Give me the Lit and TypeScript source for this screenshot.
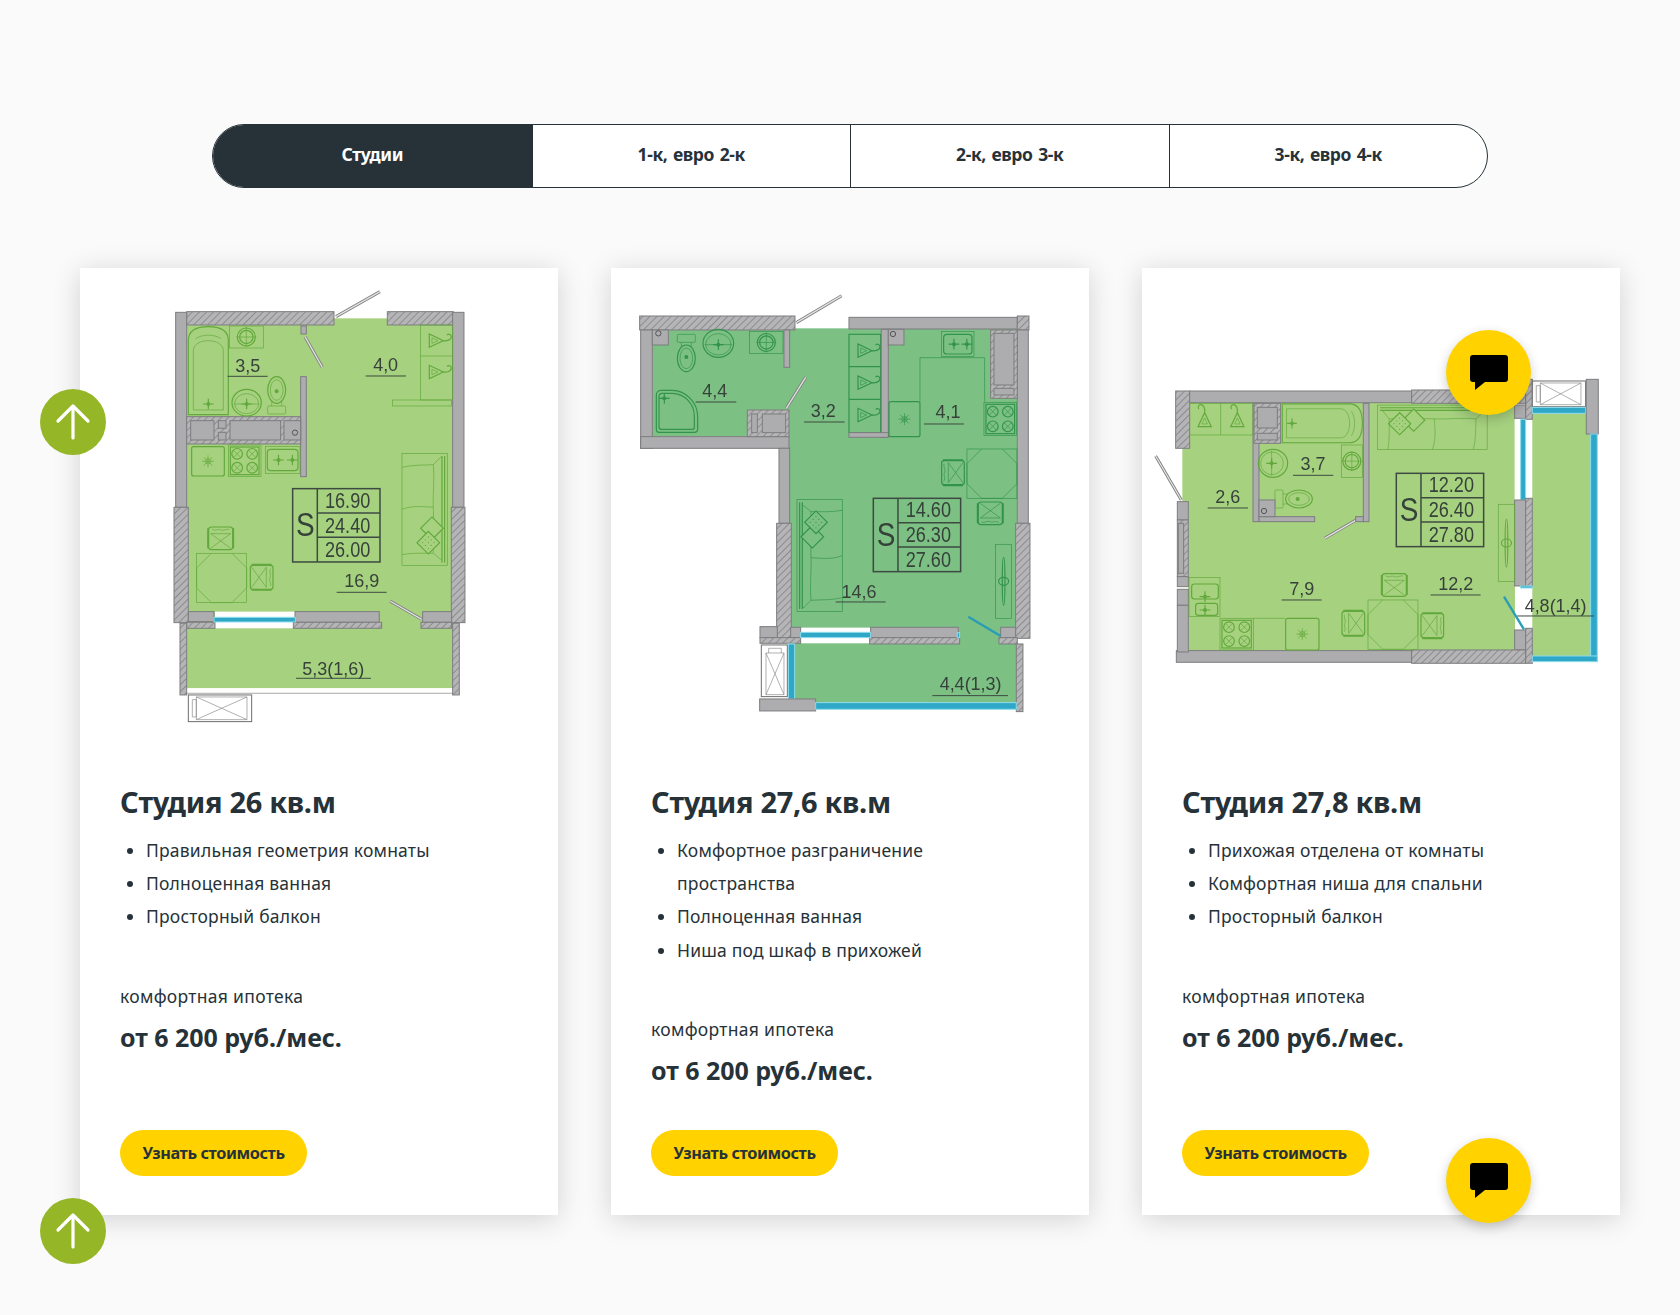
import { LitElement, html, css, svg } from 'lit';
import { customElement } from 'lit/decorators.js';

const wall = (x: number, y: number, w: number, h: number) =>
  svg`<rect class="wall" x=${x} y=${y} width=${w} height=${h}></rect>`;
const hatch = (x: number, y: number, w: number, h: number) =>
  svg`<rect class="hatch" x=${x} y=${y} width=${w} height=${h}></rect>`;
const blue = (x: number, y: number, w: number, h: number) =>
  svg`<rect class="glass" x=${x} y=${y} width=${w} height=${h}></rect>`;
const white = (x: number, y: number, w: number, h: number) =>
  svg`<rect class="blank" x=${x} y=${y} width=${w} height=${h}></rect>`;

const door = (x1: number, y1: number, x2: number, y2: number, glass = false) => svg`
  <line class=${glass ? 'door-blue' : 'door-out'} x1=${x1} y1=${y1} x2=${x2} y2=${y2}></line>
  ${glass ? '' : svg`<line class="door-in" x1=${x1} y1=${y1} x2=${x2} y2=${y2}></line>`}`;

const label = (x: number, y: number, t: string, u1: number, u2: number, uy: number) => svg`
  <text class="lbl" x=${x} y=${y}>${t}</text>
  <line class="rule" x1=${u1} y1=${uy} x2=${u2} y2=${uy}></line>`;

const info = (x: number, y: number, a: string, b: string, c: string) => svg`
  <rect class="tbl" x=${x} y=${y} width="262" height="220"></rect>
  <line class="tbl" x1=${x + 74} y1=${y} x2=${x + 74} y2=${y + 220}></line>
  <line class="tbl" x1=${x + 74} y1=${y + 73} x2=${x + 262} y2=${y + 73}></line>
  <line class="tbl" x1=${x + 74} y1=${y + 146} x2=${x + 262} y2=${y + 146}></line>
  <text class="big" x=${x + 38} y=${y + 143} textLength="56" lengthAdjust="spacingAndGlyphs">S</text>
  <text class="num" x=${x + 165} y=${y + 57} textLength="136" lengthAdjust="spacingAndGlyphs">${a}</text>
  <text class="num" x=${x + 165} y=${y + 132} textLength="136" lengthAdjust="spacingAndGlyphs">${b}</text>
  <text class="num" x=${x + 165} y=${y + 206} textLength="136" lengthAdjust="spacingAndGlyphs">${c}</text>`;

const at = (x: number, y: number, r: number, body: unknown) =>
  svg`<g transform="translate(${x} ${y}) rotate(${r})">${body}</g>`;

const drain = (x: number, y: number) => svg`
  <path class="f" d="M${x - 16} ${y}h32M${x} ${y - 16}v32"></path>
  <circle class="dot" cx=${x} cy=${y} r="6"></circle>`;

// all furniture is drawn around its own centre, then rotated into place
const hanger = svg`
  <path class="f" d="M-20 20L22 0L-20 -20Z"></path>
  <path class="f thin" d="M-12 8L6 0L-12 -8Z"></path>
  <path class="f" d="M22 0c10 2 24 -2 24 -12c0 -6 -8 -10 -13 -5"></path>`;

const washer = (x: number, y: number, w: number, h: number) => svg`
  <rect class="f thin" x=${x} y=${y} width=${w} height=${h}></rect>
  <circle class="f" cx=${x + w / 2} cy=${y + h / 2} r="27"></circle>
  <circle class="f" cx=${x + w / 2} cy=${y + h / 2} r="20"></circle>
  <path class="f thin" d="M${x + w / 2 - 30} ${y + h / 2}h60M${x + w / 2} ${y + h / 2 - 30}v60"></path>`;

const roundSink = (x: number, y: number, rx: number, ry: number) => svg`
  <ellipse class="f" cx=${x} cy=${y} rx=${rx} ry=${ry}></ellipse>
  <ellipse class="f thin" cx=${x} cy=${y + 3} rx=${rx - 8} ry=${ry - 10}></ellipse>
  <path class="f thin" d="M${x - rx + 5} ${y + 4}h${rx * 2 - 10}"></path>
  ${drain(x, y + 4)}`;

const toilet = svg`
  <ellipse class="f" cx="0" cy="10" rx="27" ry="40"></ellipse>
  <ellipse class="f thin" cx="0" cy="10" rx="19" ry="31"></ellipse>
  <rect class="f thin" x="-27" y="-62" width="54" height="24" rx="3"></rect>
  <path class="f thin" d="M-16 -38c2 8 2 10 0 14M16 -38c-2 8 -2 10 0 14"></path>
  <circle class="dot" cx="0" cy="6" r="6"></circle>`;

const bath = svg`
  <path class="f" d="M-60 132V-90c0 -28 20 -42 60 -42s60 14 60 42V132Z"></path>
  <path class="f thin" d="M-45 118V-60c0 -40 90 -40 90 0V118Z"></path>
  <path class="f thin" d="M-38 -96c20 -14 56 -14 76 0"></path>
  ${drain(0, 100)}`;

const chair = svg`
  <rect class="f" x="-36" y="-34" width="72" height="68" rx="8"></rect>
  <path class="f thin" d="M-30 -14L30 30M30 -14L-30 30M-30 -14H30"></path>
  <path class="f thin" d="M-26 -28c10 8 18 -2 26 3c8 4 16 -4 26 -2"></path>
  <path class="f thick" d="M-38 -30V30M38 -30V30"></path>`;

const table = (x: number, y: number) => svg`
  <rect class="f thin" x=${x} y=${y} width="150" height="148"></rect>
  <path class="f thin" d="M${x + 44} ${y}L${x} ${y + 44}V${y + 104}L${x + 44} ${y + 148}H${x + 106}L${x + 150} ${y + 104}V${y + 44}L${x + 106} ${y}"></path>`;

const burner = (x: number, y: number) => svg`
  <circle class="f" cx=${x} cy=${y} r="16"></circle>
  <path class="f thin" d="M${x - 11} ${y - 11}L${x + 11} ${y + 11}M${x + 11} ${y - 11}L${x - 11} ${y + 11}"></path>`;

const stove = (x: number, y: number, w: number, h: number) => svg`
  <rect class="f thin" x=${x} y=${y} width=${w} height=${h}></rect>
  <rect class="f" x=${x + 6} y=${y + 6} width=${w - 12} height=${h - 12}></rect>
  ${burner(x + w * 0.27, y + h * 0.28)}${burner(x + w * 0.73, y + h * 0.28)}
  ${burner(x + w * 0.27, y + h * 0.72)}${burner(x + w * 0.73, y + h * 0.72)}`;

const fridge = (x: number, y: number, w: number, h: number) => {
  const cx = x + w / 2;
  const cy = y + h / 2;
  return svg`
    <rect class="f" x=${x} y=${y} width=${w} height=${h} rx="6"></rect>
    <path class="f thin" d="M${cx - 18} ${cy}h36M${cx} ${cy - 18}v36M${cx - 13} ${cy - 13}l26 26M${cx + 13} ${cy - 13}l-26 26"></path>
    <circle class="f thin" cx=${cx} cy=${cy} r="8"></circle>`;
};

const kitchenSink = (x: number, y: number, w: number, h: number) => svg`
  <rect class="f thin" x=${x} y=${y} width=${w} height=${h}></rect>
  <rect class="f" x=${x + 6} y=${y + 8} width=${w - 12} height=${h - 16} rx="10"></rect>
  ${drain(x + w * 0.38, y + h / 2)}${drain(x + w * 0.78, y + h / 2)}`;

const pillow = svg`
  <rect class="f pad" x="-24" y="-24" width="48" height="48"></rect>
  <path class="f" stroke-linecap="round" d="M-12 -12h.1M0 -12h.1M12 -12h.1M-12 0h.1M0 0h.1M12 0h.1M-12 12h.1M0 12h.1M12 12h.1"></path>`;

// width 136, height 336, back against the right edge
const sofa = svg`
  <rect class="f thin" x="-68" y="-168" width="136" height="336"></rect>
  <path class="f thin" d="M-68 -126c30 -8 66 -6 94 -8C30 -90 24 -40 26 -6c-30 -2 -64 -6 -94 6M26 -6c2 40 -2 90 0 138c-30 0 -62 -2 -94 4"></path>
  <path class="f" d="M52 -160V160M60 -160V160"></path>
  <path class="f thin" d="M26 -134c10 -10 18 -20 26 -24M26 132c10 8 18 16 26 20"></path>
  ${at(22, 57, 45, svg`<rect class="f pad" x="-24" y="-24" width="48" height="48"></rect>`)}
  ${at(11, 100, 45, pillow)}`;

const tv = (x: number, y: number, w: number, h: number) => svg`
  <rect class="f thin" x=${x} y=${y} width=${w} height=${h}></rect>
  <ellipse class="f" cx=${x + w / 2} cy=${y + h / 2} rx="4" ry="72"></ellipse>
  <ellipse class="f" cx=${x + w / 2} cy=${y + h / 2} rx="15" ry="12"></ellipse>`;

const boxX = (x: number, y: number, w: number, h: number) => svg`
  <rect class="box" x=${x} y=${y} width=${w} height=${h}></rect>
  <path class="xline" d="M${x + 24} ${y + 6}H${x + w - 14}V${y + h - 6}H${x + 24}ZM${x + 24} ${y + 6}L${x + w - 14} ${y + h - 6}M${x + 24} ${y + h - 6}L${x + w - 14} ${y + 6}M${x + 12} ${y + 14}H${x + 24}V${y + h - 14}H${x + 12}Z"></path>`;

const boxXTall = (x: number, y: number, w: number, h: number) => svg`
  <rect class="box" x=${x} y=${y} width=${w} height=${h}></rect>
  <path class="xline" d="M${x + 14} ${y + 24}V${y + h - 6}H${x + w - 10}V${y + 24}ZM${x + 14} ${y + 24}L${x + w - 10} ${y + h - 6}M${x + w - 10} ${y + 24}L${x + 14} ${y + h - 6}M${x + 22} ${y + 24}V${y + 10}H${x + w - 18}V${y + 24}"></path>`;

const socket = (x: number, y: number, w: number, h: number, cx: number, cy: number) => svg`
  ${wall(x, y, w, h)}
  <circle class="hole" cx=${cx} cy=${cy} r="8"></circle>`;

const planOne = () => svg`
  <rect class="floor" x="80" y="115" width="800" height="1110"></rect>
  ${hatch(80, 95, 442, 40)}${hatch(682, 95, 198, 40)}
  ${wall(47, 97, 33, 585)}${wall(878, 97, 34, 585)}
  ${hatch(42, 682, 43, 346)}${hatch(874, 682, 41, 346)}
  ${white(165, 995, 240, 50)}
  ${wall(85, 995, 77, 30)}${hatch(80, 1027, 85, 18)}
  ${wall(405, 995, 253, 32)}${hatch(400, 1027, 265, 18)}
  ${wall(788, 995, 87, 32)}${hatch(783, 1027, 92, 18)}
  ${blue(162, 1012, 244, 14)}
  <rect class="blank" x="80" y="1225" width="798" height="14"></rect>
  <line class="tbl-light" x1="80" y1="1240" x2="878" y2="1240"></line>
  ${hatch(60, 1030, 20, 215)}${hatch(878, 1030, 20, 215)}
  ${boxX(85, 1245, 190, 80)}
  ${door(528, 110, 660, 35)}${door(690, 963, 785, 1018)}
  ${wall(423, 138, 16, 24)}${door(435, 170, 487, 262)}
  ${wall(422, 290, 17, 300)}
  ${hatch(80, 410, 342, 82)}
  ${wall(92, 422, 70, 58)}${wall(175, 422, 23, 23)}${wall(175, 457, 23, 23)}${wall(210, 422, 152, 58)}
  ${socket(372, 422, 50, 58, 405, 458)}
  ${at(145, 272, 0, bath)}
  ${washer(208, 138, 102, 66)}
  ${roundSink(260, 368, 44, 40)}
  ${at(350, 340, 180, toilet)}
  ${fridge(95, 500, 98, 88)}
  ${stove(205, 495, 98, 95)}
  ${kitchenSink(316, 500, 104, 80)}
  <rect class="f thin" x="782" y="135" width="96" height="225"></rect>
  <line class="f thin" x1="782" y1="228" x2="878" y2="228"></line>
  ${at(828, 182, 0, hanger)}${at(828, 276, 0, hanger)}
  <rect class="f thin" x="698" y="360" width="177" height="18"></rect>
  ${at(794, 688, 0, sofa)}
  ${table(110, 820)}
  ${at(182, 775, 0, chair)}${at(305, 892, 90, chair)}
  ${info(398, 626, '16.90', '24.40', '26.00')}
  ${label(263, 275, '3,5', 203, 323, 289)}
  ${label(677, 272, '4,0', 617, 738, 288)}
  ${label(605, 922, '16,9', 530, 680, 937)}
  ${label(520, 1185, '5,3(1,6)', 408, 633, 1195)}`;

const planTwo = () => svg`
  <rect class="floor" x="70" y="150" width="412" height="320"></rect>
  <rect class="floor" x="480" y="145" width="685" height="930"></rect>
  <rect class="floor" x="495" y="1070" width="670" height="200"></rect>
  ${hatch(32, 108, 466, 42)}${wall(660, 112, 505, 35)}${hatch(1165, 108, 35, 42)}
  ${wall(1165, 150, 33, 580)}${hatch(1160, 730, 43, 345)}
  ${wall(35, 150, 35, 355)}${wall(35, 470, 445, 35)}${wall(450, 505, 32, 225)}
  ${hatch(443, 730, 44, 345)}
  ${white(515, 1043, 210, 47)}
  ${wall(393, 1040, 52, 33)}${wall(485, 1042, 30, 31)}${hatch(393, 1073, 122, 17)}
  ${wall(725, 1042, 263, 31)}${hatch(722, 1073, 270, 19)}
  ${wall(1115, 1042, 45, 31)}${hatch(1110, 1073, 55, 19)}
  ${blue(515, 1057, 210, 16)}${blue(985, 1058, 7, 15)}
  ${hatch(1162, 1092, 20, 203)}
  ${blue(478, 1092, 19, 165)}
  ${wall(392, 1257, 168, 36)}${blue(560, 1268, 602, 20)}
  ${boxXTall(397, 1095, 78, 155)}
  ${door(502, 128, 638, 47)}${door(472, 385, 530, 292)}
  ${door(1018, 1010, 1115, 1068, true)}
  ${wall(465, 150, 17, 112)}
  ${socket(70, 150, 48, 45, 88, 160)}
  ${at(172, 225, 0, toilet)}
  ${roundSink(268, 190, 46, 42)}
  ${washer(362, 155, 100, 65)}
  <path class="f" d="M82 345c0 -8 6 -14 14 -14h34c40 0 76 36 76 78v38c0 6 -4 10 -10 10H90c-5 0 -8 -4 -8 -10Z"></path>
  <path class="f" d="M90 350c0 -6 4 -10 10 -10h30c36 0 66 32 66 68v34c0 4 -2 6 -6 6H98c-4 0 -8 -3 -8 -8Z"></path>
  ${drain(106, 355)}
  ${hatch(355, 390, 125, 80)}${wall(368, 402, 17, 56)}${wall(400, 402, 70, 56)}
  <rect class="f" x="660" y="163" width="95" height="295"></rect>
  <path class="f" d="M660 260h95M660 358h95"></path>
  ${at(707, 212, 0, hanger)}${at(707, 308, 0, hanger)}${at(707, 405, 0, hanger)}
  ${wall(757, 148, 21, 324)}${wall(660, 458, 118, 14)}
  ${socket(778, 148, 47, 47, 792, 162)}
  ${kitchenSink(938, 155, 97, 75)}
  <path class="f thin" d="M873 365V233H1067V365"></path>
  ${hatch(1085, 150, 80, 205)}${wall(1095, 160, 60, 155)}${wall(1095, 325, 60, 20)}
  ${stove(1065, 367, 98, 100)}
  ${fridge(780, 365, 93, 105)}
  ${table(1014, 507)}
  ${at(972, 578, -90, chair)}${at(1084, 700, 180, chair)}
  ${info(733, 655, '14.60', '26.30', '27.60')}
  ${at(572, 827, 180, sofa)}
  ${tv(1100, 793, 48, 222)}
  ${label(257, 350, '4,4', 200, 322, 366)}
  ${label(583, 412, '3,2', 525, 647, 426)}
  ${label(957, 415, '4,1', 885, 1005, 432)}
  ${label(690, 955, '14,6', 620, 770, 966)}
  ${label(1025, 1230, '4,4(1,3)', 910, 1137, 1247)}`;

const planThree = () => svg`
  <rect class="floor" x="118" y="248" width="980" height="745"></rect>
  <rect class="floor" x="100" y="385" width="20" height="160"></rect>
  <rect class="floor" x="1150" y="280" width="176" height="730"></rect>
  ${hatch(80, 213, 42, 172)}${wall(122, 213, 666, 35)}${hatch(788, 210, 342, 40)}
  ${hatch(1130, 178, 20, 120)}${wall(1097, 255, 33, 40)}
  ${white(1097, 298, 18, 242)}${blue(1115, 298, 15, 242)}
  ${wall(1097, 540, 33, 258)}${hatch(1130, 535, 20, 267)}
  ${blue(1115, 798, 35, 6)}
  ${wall(1097, 930, 33, 60)}${hatch(1130, 925, 20, 105)}
  ${wall(82, 992, 706, 35)}${hatch(788, 990, 342, 40)}
  ${wall(85, 545, 33, 55)}${hatch(85, 600, 33, 170)}${wall(88, 610, 16, 150)}
  ${wall(85, 770, 33, 30)}${wall(85, 808, 33, 48)}${wall(85, 856, 33, 140)}
  ${boxX(1150, 183, 160, 77)}
  ${blue(1150, 262, 160, 18)}
  ${wall(1312, 178, 36, 164)}
  ${blue(1325, 342, 20, 683)}${blue(1150, 1008, 195, 17)}
  ${door(20, 408, 97, 540)}${door(527, 655, 625, 598)}
  ${door(1065, 830, 1125, 928, true)}
  ${wall(312, 250, 18, 355)}${wall(330, 590, 167, 15)}${wall(643, 250, 17, 355)}
  ${wall(620, 590, 23, 15)}
  ${hatch(315, 250, 80, 120)}${wall(325, 262, 60, 62)}${wall(325, 340, 60, 20)}
  <rect class="f thin" x="122" y="250" width="190" height="95"></rect>
  <line class="f thin" x1="215" y1="250" x2="215" y2="345"></line>
  ${at(167, 300, -90, hanger)}${at(265, 300, -90, hanger)}
  ${at(520, 310, 90, svg`<g transform="scale(.97 .91)">${bath}</g>`)}
  ${washer(577, 375, 63, 97)}
  ${at(372, 430, 90, roundSink(0, 0, 42, 44))}
  ${at(440, 537, -90, toilet)}
  ${socket(330, 540, 48, 50, 345, 573)}
  ${at(850, 322, -90, svg`<g transform="scale(.98 -.98)">${sofa}</g>`)}
  ${info(742, 460, '12.20', '26.40', '27.80')}
  ${tv(1048, 553, 49, 232)}
  <rect class="f thin" x="120" y="773" width="93" height="117"></rect>
  <rect class="f" x="128" y="792" width="80" height="45" rx="8"></rect>
  <rect class="f" x="140" y="850" width="66" height="36" rx="8"></rect>
  ${drain(168, 830)}${drain(168, 870)}
  ${stove(213, 895, 100, 95)}
  <line class="f thin" x1="313" y1="895" x2="408" y2="895"></line>
  ${fridge(410, 895, 100, 95)}
  ${table(657, 840)}
  ${at(736, 795, 0, chair)}${at(613, 910, -90, chair)}${at(850, 917, 90, chair)}
  ${label(492, 450, '3,7', 432, 553, 466)}
  ${label(236, 548, '2,6', 176, 297, 564)}
  ${label(458, 825, '7,9', 398, 518, 840)}
  ${label(920, 810, '12,2', 845, 995, 825)}
  ${label(1220, 875, '4,8(1,4)', 1105, 1335, 888)}`;

const cards = [
  {
    title: 'Студия 26 кв.м',
    items: ['Правильная геометрия комнаты', 'Полноценная ванная', 'Просторный балкон'],
    plan: planOne,
    tone: 'light',
    place: 'translate(80 12) scale(.3333)',
  },
  {
    title: 'Студия 27,6 кв.м',
    items: ['Комфортное разграничение пространства', 'Полноценная ванная', 'Ниша под шкаф в прихожей'],
    plan: planTwo,
    tone: 'deep',
    place: 'translate(18 12) scale(.3333)',
  },
  {
    title: 'Студия 27,8 кв.м',
    items: ['Прихожая отделена от комнаты', 'Комфортная ниша для спальни', 'Просторный балкон'],
    plan: planThree,
    tone: 'light',
    place: 'translate(7 52) scale(.3333)',
  },
];

const tabs = ['Студии', '1-к, евро 2-к', '2-к, евро 3-к', '3-к, евро 4-к'];

const arrowIcon = html`<svg width="36" height="38" viewBox="0 0 36 38">
  <path d="M18 35V3M3 18L18 3L33 18" fill="none" stroke="#fff" stroke-width="3.2" stroke-linecap="round" stroke-linejoin="round"></path>
</svg>`;

const chatIcon = html`<svg width="38" height="36" viewBox="0 0 38 36">
  <path d="M3 0H35a3 3 0 0 1 3 3V24a3 3 0 0 1 -3 3H15L5 35V27H3a3 3 0 0 1 -3 -3V3a3 3 0 0 1 3 -3Z" fill="#000"></path>
</svg>`;

@customElement('app-root')
export class AppRoot extends LitElement {
  static styles = css`
    :host {
      display: block;
      position: relative;
      width: 1680px;
      height: 1315px;
      overflow: hidden;
      background: #fafafa;
      color: #263238;
      font-family: 'Noto Sans', 'Open Sans', sans-serif;
    }
    .page {
      padding-top: 124px;
    }
    .tabs {
      display: grid;
      grid-template-columns: repeat(4, 1fr);
      width: 1276px;
      height: 64px;
      margin: 0 auto 0 212px;
      box-sizing: border-box;
      border: 1.5px solid #263238;
      border-radius: 32px;
      overflow: hidden;
      background: #fff;
    }
    .tab {
      display: flex;
      align-items: center;
      justify-content: center;
      padding-bottom: 5px;
      font-size: 17.5px;
      font-weight: 700;
      letter-spacing: -0.4px;
      word-spacing: 1.5px;
      border-left: 1.5px solid #263238;
    }
    .tab:first-child {
      border-left: 0;
    }
    .tab.on {
      background: #263238;
      color: #fff;
    }
    .cards {
      display: grid;
      grid-template-columns: repeat(3, 478px);
      column-gap: 53px;
      margin: 80px 0 0 80px;
    }
    .card {
      display: flex;
      flex-direction: column;
      height: 947px;
      box-sizing: border-box;
      padding-bottom: 39px;
      background: #fff;
      box-shadow: 0 4px 26px rgba(0, 0, 0, 0.16);
    }
    .plan {
      display: block;
      flex: none;
      width: 478px;
      height: 512px;
      filter: blur(0.4px);
    }
    .info {
      display: flex;
      flex: 1;
      flex-direction: column;
      padding: 0 40px;
    }
    h2 {
      margin: 0;
      font-size: 29px;
      line-height: 44px;
      font-weight: 700;
      letter-spacing: -0.3px;
    }
    ul {
      margin: 10px 0 0;
      padding: 0 20px 0 26px;
      font-size: 17.5px;
      line-height: 33.2px;
      letter-spacing: 0.2px;
    }
    .mortgage {
      margin-top: 47px;
      font-size: 17.5px;
      line-height: 30px;
      letter-spacing: 0.3px;
    }
    .price {
      margin-top: 6px;
      font-size: 25px;
      line-height: 40px;
      font-weight: 700;
      letter-spacing: -0.05px;
    }
    .cta {
      display: flex;
      align-items: center;
      justify-content: center;
      width: 187px;
      height: 46px;
      margin-top: auto;
      border-radius: 23px;
      background: #ffd200;
      font-size: 16.3px;
      font-weight: 700;
      letter-spacing: -0.4px;
    }
    .fab {
      position: absolute;
      display: flex;
      align-items: center;
      justify-content: center;
      border-radius: 50%;
    }
    .up {
      left: 40px;
      width: 66px;
      height: 66px;
      background: #95b627;
    }
    .chat {
      left: 1446px;
      width: 85px;
      height: 85px;
      background: #ffd200;
      box-shadow: 0 4px 12px rgba(0, 0, 0, 0.2);
    }
    .floor {
      fill: var(--floor);
    }
    .light {
      --floor: #a6d17f;
      --ink: #62a83c;
    }
    .deep {
      --floor: #7cc084;
      --ink: #32934c;
    }
    .wall {
      fill: #adadb0;
      stroke: #7d7d7f;
      stroke-width: 3;
    }
    .hatch {
      fill: url(#hatch);
      stroke: #7d7d7f;
      stroke-width: 3;
    }
    .glass {
      fill: #2fa8c8;
      stroke: #8fdcec;
      stroke-width: 3;
    }
    .blank,
    .box {
      fill: #fff;
    }
    .box {
      stroke: #6d6d6d;
      stroke-width: 3;
    }
    .xline {
      fill: none;
      stroke: #8a8a8a;
      stroke-width: 2;
    }
    .hole {
      fill: none;
      stroke: #555;
      stroke-width: 3;
    }
    .door-out {
      stroke: #7d7d7d;
      stroke-width: 9;
    }
    .door-in {
      stroke: #e2e2e2;
      stroke-width: 4;
    }
    .door-blue {
      stroke: #2a9db5;
      stroke-width: 7;
    }
    .tbl-light {
      stroke: #aaa;
      stroke-width: 3;
    }
    .f {
      fill: none;
      stroke: var(--ink);
      stroke-width: 3.5;
    }
    .pad {
      fill: var(--floor);
    }
    .thin {
      stroke-width: 2;
    }
    .thick {
      stroke-width: 5;
    }
    .dot {
      fill: var(--ink);
    }
    .tbl {
      fill: none;
      stroke: #3d4a41;
      stroke-width: 4.5;
    }
    .rule {
      stroke: #3d4a41;
      stroke-width: 3;
    }
    .lbl,
    .num,
    .big {
      fill: #36413a;
      font-family: 'Liberation Sans', sans-serif;
      text-anchor: middle;
    }
    .lbl {
      font-size: 54px;
    }
    .num {
      font-size: 65px;
    }
    .big {
      font-size: 98px;
    }
  `;

  render() {
    return html`
      <div class="page">
        <div class="tabs">
          ${tabs.map((t, i) => html`<div class="tab ${i === 0 ? 'on' : ''}">${t}</div>`)}
        </div>
        <div class="cards">
          ${cards.map(
            (c) => html`
              <article class="card">
                <svg class="plan ${c.tone}" viewBox="0 0 478 512">
                  <defs>
                    <pattern id="hatch" width="15" height="15" patternUnits="userSpaceOnUse" patternTransform="rotate(45)">
                      <rect width="15" height="15" fill="#b5b5b7"></rect>
                      <line x1="0" y1="0" x2="0" y2="15" stroke="#77777a" stroke-width="4"></line>
                    </pattern>
                  </defs>
                  <g transform=${c.place}>${c.plan()}</g>
                </svg>
                <div class="info">
                  <h2>${c.title}</h2>
                  <ul>
                    ${c.items.map((t) => html`<li>${t}</li>`)}
                  </ul>
                  <div class="mortgage">комфортная ипотека</div>
                  <div class="price">от 6 200 руб./мес.</div>
                  <div class="cta">Узнать стоимость</div>
                </div>
              </article>
            `
          )}
        </div>
      </div>
      <div class="fab up" style="top:389px">${arrowIcon}</div>
      <div class="fab up" style="top:1198px">${arrowIcon}</div>
      <div class="fab chat" style="top:330px">${chatIcon}</div>
      <div class="fab chat" style="top:1138px">${chatIcon}</div>
    `;
  }
}
